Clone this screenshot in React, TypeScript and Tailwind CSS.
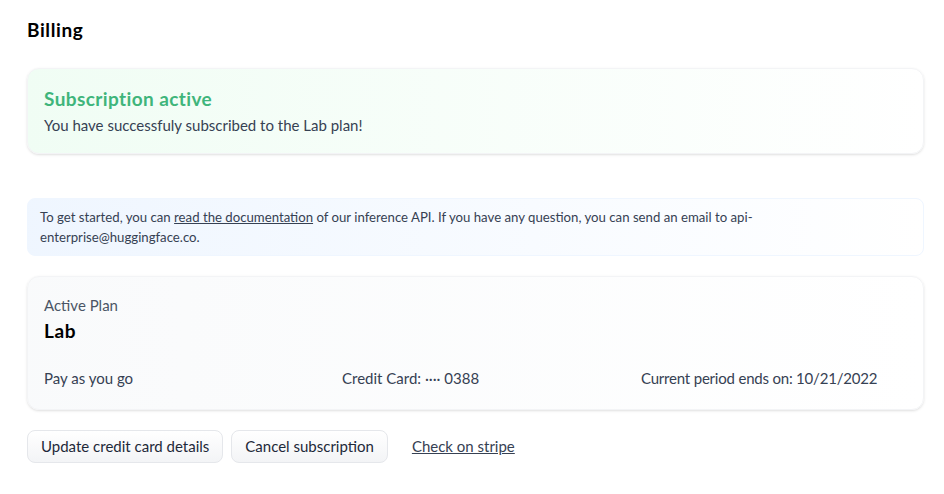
export default function App() {
  return (
    <main
      className="min-h-screen bg-white pl-[27px] pr-5 pt-4 text-gray-700"
      style={{ fontFamily: 'Lato, "Noto Sans", sans-serif' }}
    >
      <h1 className="text-[19px] font-bold leading-7 tracking-[0.6px] text-black">Billing</h1>

      {/* Subscription status */}
      <div className="mt-6 rounded-xl border border-gray-100 bg-gradient-to-r from-green-50 to-white px-4 pb-4 pt-4 shadow-sm">
        <h2 className="text-[19px] font-bold leading-7 tracking-[0.4px] text-[#3fb57b]">Subscription active</h2>
        <p className="text-[15px] leading-6 text-gray-700">You have successfuly subscribed to the Lab plan!</p>
      </div>

      {/* Docs info */}
      <div className="mt-11 rounded-lg border border-blue-50 bg-gradient-to-r from-blue-50 to-white px-3 py-2 text-[13.2px] leading-5 text-gray-700">
        To get started, you can <a href="#" className="underline">read the documentation</a> of our inference
        API. If you have any question, you can send an email to api-enterprise@huggingface.co.
      </div>

      {/* Active plan */}
      <div className="mt-5 rounded-xl border border-gray-100 bg-gradient-to-r from-gray-50 to-white px-4 pb-[19px] pt-4 shadow-sm">
        <p className="text-[15px] leading-6 text-gray-600">Active Plan</p>
        <p className="text-[19px] font-bold leading-7 tracking-[0.6px] text-black">Lab</p>
        <div className="mt-[21px] grid grid-cols-[298px_299px_1fr] text-[15px] leading-6 text-gray-700">
          <span>Pay as you go</span>
          <span>Credit Card: ···· 0388</span>
          <span className="tracking-[-0.2px]">Current period ends on: 10/21/2022</span>
        </div>
      </div>

      {/* Actions */}
      <div className="mt-5 flex items-center gap-2 text-[15px]">
        <button className="h-[33px] rounded-lg border border-gray-200 bg-gradient-to-b from-white to-gray-100 px-[13px] text-gray-800">
          Update credit card details
        </button>
        <button className="h-[33px] rounded-lg border border-gray-200 bg-gradient-to-b from-white to-gray-100 px-[13px] text-gray-800">
          Cancel subscription
        </button>
        <a href="#" className="ml-4 text-gray-700 underline">Check on stripe</a>
      </div>
    </main>
  )
}
